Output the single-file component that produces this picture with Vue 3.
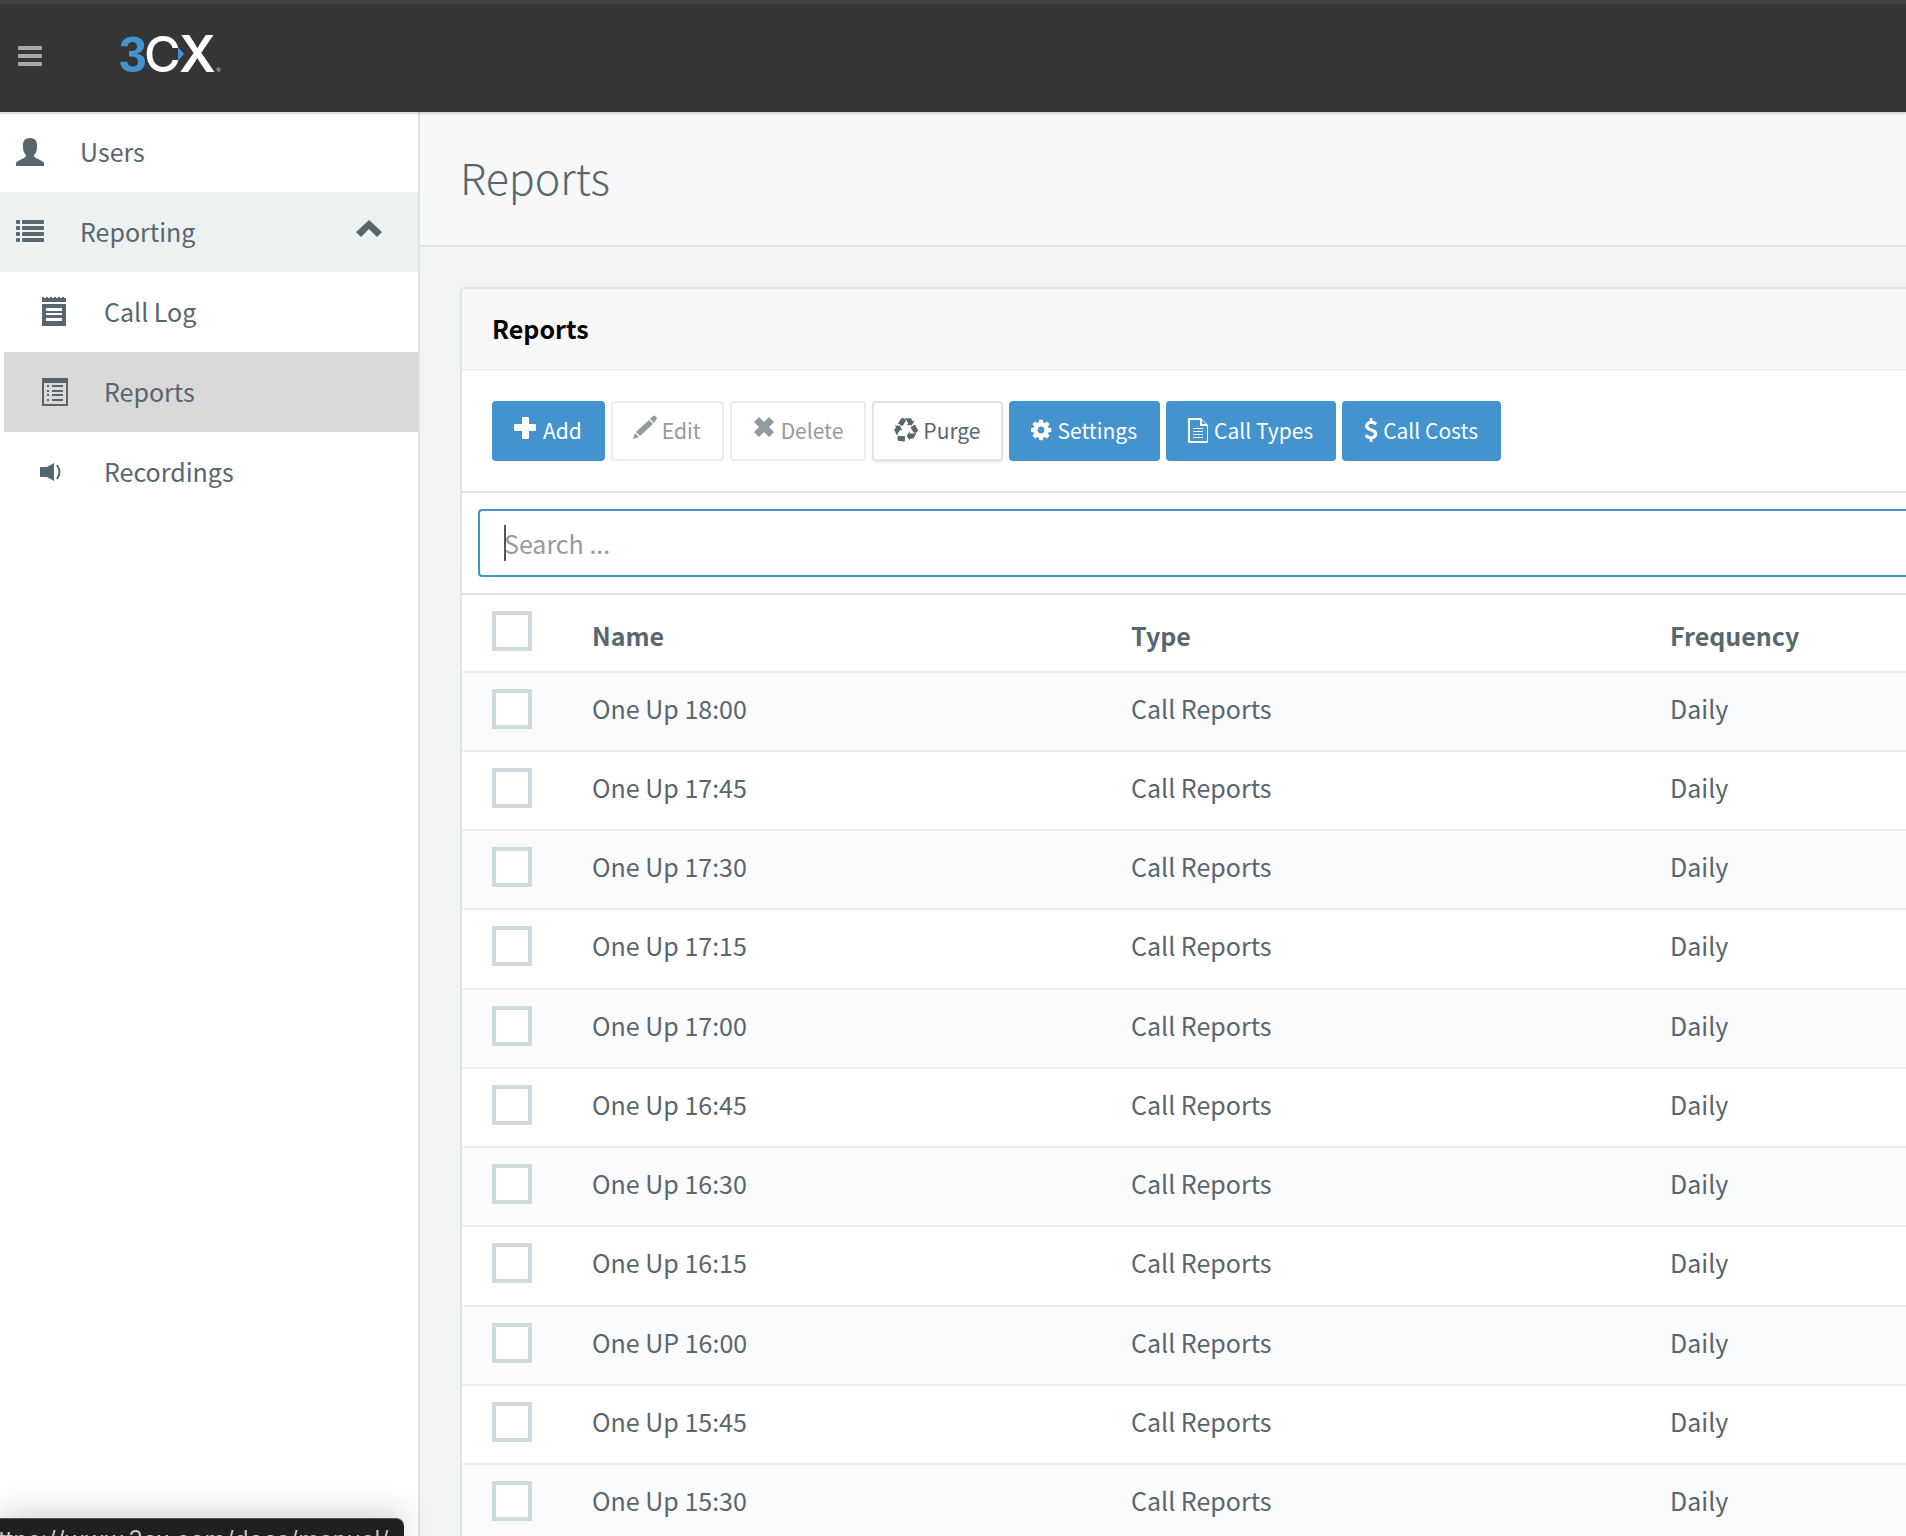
<script setup>
import { ref } from 'vue'

const query = ref('')
const names = [
  'One Up 18:00',
  'One Up 17:45',
  'One Up 17:30',
  'One Up 17:15',
  'One Up 17:00',
  'One Up 16:45',
  'One Up 16:30',
  'One Up 16:15',
  'One UP 16:00',
  'One Up 15:45',
  'One Up 15:30',
]
const reports = ref(names.map((name) => ({ name, type: 'Call Reports', frequency: 'Daily', selected: false })))

function toggleAll(event) {
  reports.value.forEach((r) => { r.selected = event.target.checked })
}
</script>

<template>
  <div class="app">
    <header class="topbar">
      <button class="menu-toggle" type="button" aria-label="Toggle menu">
        <svg width="24" height="20" viewBox="0 0 24 20">
          <rect width="24" height="4" rx="1" />
          <rect y="8" width="24" height="4" rx="1" />
          <rect y="16" width="24" height="4" rx="1" />
        </svg>
      </button>
      <a class="logo" href="#" aria-label="3CX">
        <svg width="102" height="60" viewBox="0 -11 102 60">
          <text class="logo-three" x="-1" y="37">3</text>
          <text class="logo-c" x="24" y="37">C</text>
          <path d="M58 0h8v40h-8z" fill="#353535" />
          <text class="logo-x" x="59" y="37">X</text>
          <path d="M58 12l6 7-6 7z" fill="#4393ce" />
          <text class="logo-mark" x="96" y="37">®</text>
        </svg>
      </a>
    </header>

    <div class="body">
      <nav class="sidebar">
        <a class="item" href="#">
          <span class="slot">
            <svg width="28" height="28" viewBox="0 0 28 28">
              <path d="M14 0c5 0 7 3 7 7v2c0 4-1 6-3 8v1c0 1 2 2 4 3 4 2 6 3 6 4v3H0v-3c0-1 2-2 6-4 2-1 4-2 4-3v-1c-2-2-3-4-3-8V7c0-4 2-7 7-7z" />
            </svg>
          </span>
          <span class="label">Users</span>
        </a>
        <a class="item open" href="#">
          <span class="slot">
            <svg width="28" height="24" viewBox="0 0 28 24">
              <g v-for="n in 4" :key="n">
                <rect :y="(n - 1) * 6" width="4" height="4" rx="1" />
                <rect x="6" :y="(n - 1) * 6" width="22" height="4" rx="1" />
              </g>
            </svg>
          </span>
          <span class="label">Reporting</span>
          <svg class="chevron" width="26" height="26" viewBox="0 0 26 26">
            <path d="M13 1l13 12-5 5-8-8-8 8-5-5z" />
          </svg>
        </a>
        <div class="submenu">
          <a class="item" href="#">
            <span class="slot">
              <svg width="28" height="30" viewBox="0 0 28 30">
                <path d="M2 0h2v1h2V0h2v1h2V0h2v1h2V0h2v1h2V0h2v1h2V0h2v1h2V0v5H2z" />
                <path fill-rule="evenodd" d="M2 7h24v22H2zm4 4v3h16v-3zm0 5v2h16v-2zm0 5v3h16v-3z" />
              </svg>
            </span>
            <span class="label">Call Log</span>
          </a>
          <a class="item active" href="#">
            <span class="slot">
              <svg width="28" height="28" viewBox="0 0 28 28">
                <path fill-rule="evenodd" d="M2 0h26v28H2zm2 5v21h22V5z" />
                <path d="M7 7h2v2H7zm5 0h11v2H12zM7 12h2v2H7zm5 0h11v2H12zM7 16h2v2H7zm5 0h11v2H12zM7 21h2v2H7zm5 0h11v2H12z" />
              </svg>
            </span>
            <span class="label">Reports</span>
          </a>
          <a class="item" href="#">
            <span class="slot">
              <svg width="22" height="18" viewBox="0 0 22 18">
                <path d="M0 4h7l7-4v18l-7-4H0z" />
                <path d="M17 2q5 7 0 14" fill="none" stroke="#58666e" stroke-width="2" />
              </svg>
            </span>
            <span class="label">Recordings</span>
          </a>
        </div>
      </nav>

      <main class="content">
        <div class="page-head">
          <h1>Reports</h1>
        </div>

        <section class="panel">
          <h2 class="panel-head">Reports</h2>

          <div class="toolbar">
            <button class="btn primary" type="button">
              <svg width="24" height="32" viewBox="1 -1 24 32">
                <path d="M9 2h6q1 0 1 1v6h6q1 0 1 1v5q0 1-1 1h-6v7q0 1-1 1H10q-1 0-1-1v-7H2q-1 0-1-1v-5q0-1 1-1h7z" />
              </svg>Add
            </button>
            <button class="btn" type="button" disabled>
              <svg width="24" height="32" viewBox="1 -1 24 32">
                <path d="M1 24l2-6 4 4zM4 17L17 5l4 4L8 21zM18 4l3-3q1-1 2 0l2 2q0 1-1 2l-2 3z" />
              </svg>Edit
            </button>
            <button class="btn" type="button" disabled>
              <svg width="24" height="32" viewBox="0 -1 24 32">
                <path d="M7 2l5 5 5-5 5 5-5 5 5 5-5 5-5-5-5 5-5-5 5-5-5-5z" />
              </svg>Delete
            </button>
            <button class="btn raised" type="button">
              <svg width="24" height="32" viewBox="1 -1 24 32">
                <path transform="translate(1 3) scale(.0134)" d="M820 1361l-15 368-2 22-420-29q-36-3-67-31.5t-47-65.5q-11-27-14.5-55t4-65 12-55 21.5-64 19-53q78 12 509 28zm-367-776l180 379-147-92q-63 72-111.5 144.5t-72.5 125-39.5 94.5-18.5 63l-4 21-190-357q-17-26-18-56t6-47l8-18q35-63 114-188l-140-86zm1231 517l-188 359q-12 29-36.5 46.5t-43.5 20.5l-18 4q-71 7-219 12l8 164-230-367 211-362 7 173q170 16 283 5t170-33zm-785-924q-47 63-265 435l-317-187-19-12 225-356q20-31 60-45t80-10q24 2 48.5 12t42 21 41.5 33 36 34.5 36 39.5 32 35zm655 307l212 363q18 37 12.5 76t-27.5 74q-13 20-33 37t-38 28-48.5 22-47 16-51.5 14-46 12q-34-72-265-436l313-195zm-143-226l142-83-220 373-419-20 151-86q-34-89-75-166t-75.5-123.5-64.5-80-47-46.5l-17-13 405 1q31-3 58 10.5t39 28.5l11 15q39 61 112 190z" />
              </svg>Purge
            </button>
            <button class="btn primary" type="button">
              <svg width="21" height="32" viewBox="1 -1 21 32">
                <path transform="translate(-1 3) scale(.0134)" d="M1152 896q0-106-75-181t-181-75-181 75-75 181 75 181 181 75 181-75 75-181zm512-109v222q0 12-8 23t-20 13l-185 28q-19 54-39 91 35 50 107 138 10 12 10 25t-9 23q-27 37-99 108t-94 71q-12 0-26-9l-138-108q-44 23-91 38-16 136-29 186-7 28-36 28h-222q-14 0-24.5-8.5t-11.5-21.5l-28-184q-49-16-90-37l-141 107q-10 9-25 9-14 0-25-11-126-114-165-168-7-10-7-23 0-12 8-23 15-21 51-66.5t54-70.5q-27-50-41-99l-183-27q-13-2-21-12.5t-8-23.5v-222q0-12 8-23t19-13l186-28q14-46 39-92-40-57-107-138-10-12-10-24 0-10 9-23 26-36 98.5-107.5t94.5-71.5q13 0 26 10l138 107q44-23 91-38 16-136 29-186 7-28 36-28h222q14 0 24.5 8.5t11.5 21.5l28 184q49 16 90 37l142-107q9-9 24-9 13 0 25 10 129 119 165 170 7 8 7 22 0 12-8 23-15 21-51 66.5t-54 70.5q26 50 41 98l183 28q13 2 21 12.5t8 23.5z" />
              </svg>Settings
            </button>
            <button class="btn primary" type="button">
              <svg width="21" height="32" viewBox="1 -1 21 32">
                <path fill-rule="evenodd" d="M1 4q0-1 1-1h12l7 7v17q0 1-1 1H2q-1 0-1-1zm2 1v21h17V11h-6q-1 0-1-1V5zm12 0v4h4z" />
                <path d="M6 13h10v1H6zM6 16h10v1H6zM6 19h10v1H6zM6 22h10v1H6z" />
              </svg>Call Types
            </button>
            <button class="btn primary" type="button">
              <svg width="14" height="32" viewBox="2 -1 14 32">
                <path transform="translate(-3 3) scale(.0134)" d="M1362 1185q0 153-99.5 263.5t-258.5 136.5v175q0 14-9 23t-23 9h-135q-13 0-22.5-9.5t-9.5-22.5v-175q-66-9-127.5-31t-101.5-44.5-74-48-46.5-37.5-17.5-18q-17-21-2-41l103-135q7-10 23-12 15-2 24 9l2 2q113 99 243 125 37 8 74 8 81 0 142.5-43t61.5-122q0-28-15-53t-33.5-42-58.5-37.5-66-32-80-32.5q-39-16-61.5-25t-61.5-26.5-62.5-31-56.5-35.5-53.5-42.5-43.5-49-35.5-58-21-66.5-8.5-78q0-138 98-242t255-134v-180q0-13 9.5-22.5t22.5-9.5h135q14 0 23 9t9 23v176q57 6 110.5 23t87 33.5 63.5 37.5 39 29 15 14q17 18 5 38l-81 146q-8 15-23 16-14 3-27-7-3-3-14.5-12t-39-26.5-58.5-32-74.5-26-85.5-11.5q-95 0-155 43t-60 111q0 26 8.5 48t29.5 41.5 39.5 33 56 31 60.5 27 70 27.5q53 20 81 31.5t76 35 75.5 42.5 62 50 53 63.5 31.5 76.5 13 94z" />
              </svg>Call Costs
            </button>
          </div>

          <div class="search">
            <div class="search-box">
              <input v-model="query" type="text" placeholder="Search ..." aria-label="Search reports" />
              <span class="caret" aria-hidden="true"></span>
            </div>
          </div>

          <table class="grid">
            <thead>
              <tr>
                <th class="check"><input type="checkbox" aria-label="Select all reports" @change="toggleAll" /></th>
                <th class="wide">Name</th>
                <th class="wide">Type</th>
                <th>Frequency</th>
              </tr>
            </thead>
            <tbody>
              <tr v-for="report in reports" :key="report.name">
                <td class="check"><input v-model="report.selected" type="checkbox" :aria-label="`Select ${report.name}`" /></td>
                <td>{{ report.name }}</td>
                <td>{{ report.type }}</td>
                <td>{{ report.frequency }}</td>
              </tr>
            </tbody>
          </table>
        </section>
      </main>
    </div>

    <div class="link-status"><span>https://www.3cx.com/docs/manual/</span></div>
  </div>
</template>

<style>
body {
  margin: 0;
  overflow: hidden;
}
</style>

<style scoped>
.app {
  display: flex;
  flex-direction: column;
  height: 100vh;
  overflow: hidden;
  background: #f1f3f5;
  color: #58666e;
  font-family: "Noto Sans CJK SC", "Noto Sans", sans-serif;
  font-size: 25px;
}

.app * {
  box-sizing: border-box;
}

svg {
  display: block;
  flex: none;
  fill: currentColor;
}

.topbar {
  position: relative;
  z-index: 1;
  display: flex;
  flex: none;
  align-items: center;
  gap: 78px;
  height: 112px;
  padding: 0 18px 4px;
  border-top: 4px solid #424242;
  background: #353535;
  box-shadow: 0 2px 0 rgba(0, 0, 0, 0.08), 0 3px 3px rgba(0, 0, 0, 0.06);
}

.menu-toggle {
  padding: 0;
  border: 0;
  background: none;
  color: #a9a9a9;
}

.logo {
  padding-bottom: 4px;
}

.logo-three {
  fill: #4393ce;
  font: bold 50px "Liberation Sans", sans-serif;
}

.logo-c {
  fill: #fff;
  font: 500 50px Inter, sans-serif;
}

.logo-x {
  fill: #fff;
  font: 600 51px Inter, sans-serif;
}

.logo-mark {
  fill: #ccc;
  font: 6px Lato, sans-serif;
}

.body {
  display: flex;
  flex: 1;
  min-height: 0;
}

.sidebar {
  flex: none;
  width: 420px;
  border-right: 2px solid #dee5e7;
  background: #fff;
}

.item {
  display: flex;
  align-items: center;
  height: 80px;
  padding: 0 36px 0 16px;
  color: #58666e;
  text-decoration: none;
}

.item.open {
  background: #edf1f2;
}

.submenu .item {
  margin-left: 4px;
  padding-left: 36px;
}

.item.active {
  background: #d9d9d9;
}

.slot {
  flex: none;
  width: 64px;
}

.label {
  flex: 1;
  padding-bottom: 2px;
  line-height: 40px;
}

.content {
  flex: 1;
  min-width: 0;
}

.page-head {
  padding: 32px 40px 37px;
  border-bottom: 2px solid #dee5e7;
  background: #f7f8fa;
}

h1 {
  margin: 0;
  font-size: 43px;
  font-weight: 300;
  line-height: 64px;
}

.panel {
  margin: 40px 0 0 40px;
  border: solid #dee5e7;
  border-width: 2px 0 0 2px;
  border-radius: 4px 0 0 0;
  background: #fff;
}

.panel-head {
  margin: 0;
  padding: 0 30px 2px;
  border-bottom: 2px solid #edf1f2;
  background: #f6f8f8;
  color: #000;
  font-size: 25px;
  font-weight: bold;
  line-height: 78px;
}

.toolbar {
  display: flex;
  gap: 6px;
  padding: 30px;
  border-bottom: 2px solid #dee5e7;
}

.btn {
  display: flex;
  align-items: center;
  gap: 5px;
  height: 60px;
  padding: 0 21px 2px 20px;
  border: 2px solid #dee5e7;
  border-radius: 4px;
  background: #fff;
  color: #58666e;
  font: 21px "Noto Sans CJK SC", "Noto Sans", sans-serif;
  white-space: nowrap;
}

.btn:disabled {
  opacity: 0.65;
}

.btn.raised {
  box-shadow: 0 2px 2px rgba(90, 90, 90, 0.12);
}

.btn.primary {
  border-color: #4393ce;
  background: #4393ce;
  color: #fff;
}

.search {
  padding: 16px 0 16px 16px;
  border-bottom: 2px solid #dee5e7;
}

.search-box {
  position: relative;
}

.search input {
  display: block;
  width: 100%;
  height: 68px;
  padding: 0 24px;
  border: 2px solid #4393ce;
  border-right: 0;
  border-radius: 4px 0 0 4px;
  outline: 0;
  background: #fff;
  color: #58666e;
  font: inherit;
}

.search input::placeholder {
  color: #999;
  opacity: 1;
}

.caret {
  position: absolute;
  top: 16px;
  left: 26px;
  width: 2px;
  height: 36px;
  background: #555;
}

.grid {
  width: 100%;
  border-spacing: 0;
  table-layout: fixed;
}

th,
td {
  height: 79px;
  padding: 16px 16px 0;
  border-bottom: 2px solid #eaeff0;
  line-height: 38px;
  text-align: left;
  vertical-align: top;
}

th {
  height: 78px;
  line-height: 48px;
}

tbody tr:nth-child(4n) td {
  height: 80px;
}

.check {
  width: 114px;
  padding: 16px 0 0 30px;
}

.wide {
  width: 539px;
}

.check input {
  display: block;
  width: 40px;
  height: 40px;
  margin: 0;
  border: 4px solid #cfdadd;
  background: #fff;
  appearance: none;
}

.check input:checked {
  background: #4393ce;
}

tbody tr:nth-child(odd) {
  background: #fafbfc;
}

.link-status {
  position: fixed;
  bottom: 0;
  left: 0;
  z-index: 2;
  display: flex;
  justify-content: flex-end;
  width: 404px;
  height: 18px;
  padding: 5px 15px 0 0;
  overflow: hidden;
  border-top: 1px solid #555;
  border-radius: 0 8px 0 0;
  background: #1f2120;
  box-shadow: 0 0 32px rgba(0, 0, 0, 0.3);
  color: #c4c4c4;
  font: 24px/32px Inter, sans-serif;
  white-space: nowrap;
}
</style>
